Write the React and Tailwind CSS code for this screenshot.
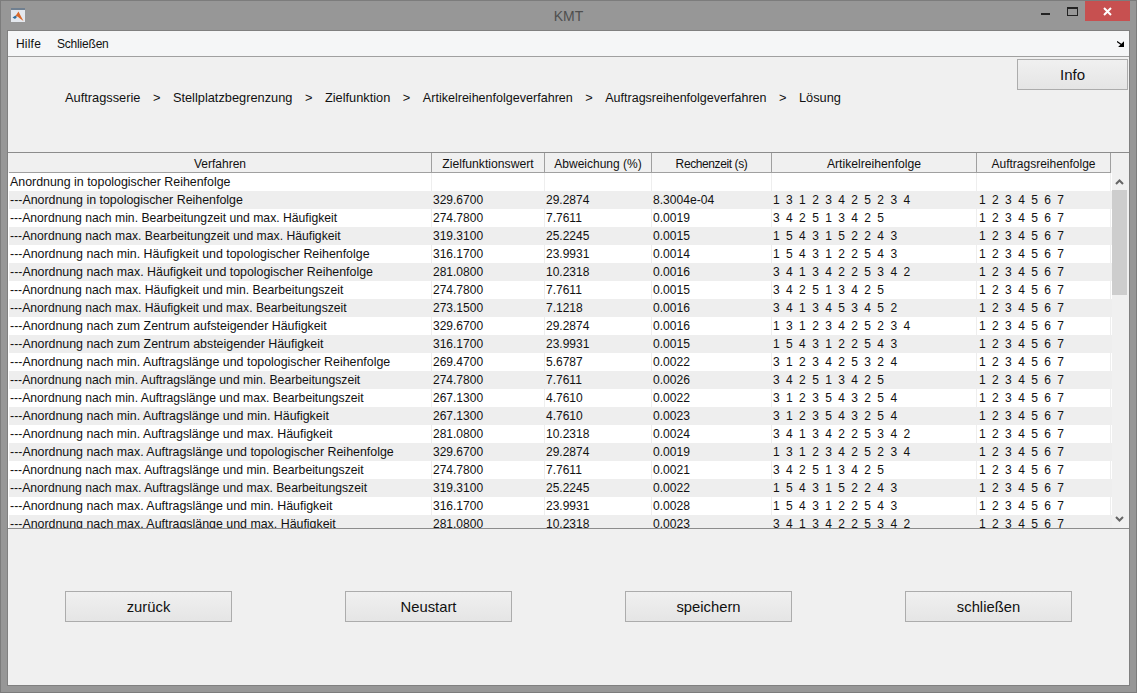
import React from "react";

const COLS = ["w-[423px]", "w-[113px]", "w-[107px]", "w-[120px]", "w-[205px]", "w-[134px]"];
const CELL_TEXT = ["text-[12.4px]", "", "", "text-[12.1px]", "tracking-[-0.1px] pl-[1px]", "tracking-[-0.1px] pl-[2px]"];

const rows = [
  ["---Anordnung in topologischer Reihenfolge", "329.6700", "29.2874", "8.3004e-04", "1 3 1 2 3 4 2 5 2 3 4"],
  ["---Anordnung nach min. Bearbeitungzeit und max. Häufigkeit", "274.7800", "7.7611", "0.0019", "3 4 2 5 1 3 4 2 5"],
  ["---Anordnung nach max. Bearbeitungzeit und max. Häufigkeit", "319.3100", "25.2245", "0.0015", "1 5 4 3 1 5 2 2 4 3"],
  ["---Anordnung nach min. Häufigkeit und topologischer Reihenfolge", "316.1700", "23.9931", "0.0014", "1 5 4 3 1 2 2 5 4 3"],
  ["---Anordnung nach max. Häufigkeit und topologischer Reihenfolge", "281.0800", "10.2318", "0.0016", "3 4 1 3 4 2 2 5 3 4 2"],
  ["---Anordnung nach max. Häufigkeit und min. Bearbeitungszeit", "274.7800", "7.7611", "0.0015", "3 4 2 5 1 3 4 2 5"],
  ["---Anordnung nach max. Häufigkeit und max. Bearbeitungszeit", "273.1500", "7.1218", "0.0016", "3 4 1 3 4 5 3 4 5 2"],
  ["---Anordnung nach zum Zentrum aufsteigender Häufigkeit", "329.6700", "29.2874", "0.0016", "1 3 1 2 3 4 2 5 2 3 4"],
  ["---Anordnung nach zum Zentrum absteigender Häufigkeit", "316.1700", "23.9931", "0.0015", "1 5 4 3 1 2 2 5 4 3"],
  ["---Anordnung nach min. Auftragslänge und topologischer Reihenfolge", "269.4700", "5.6787", "0.0022", "3 1 2 3 4 2 5 3 2 4"],
  ["---Anordnung nach min. Auftragslänge und min. Bearbeitungszeit", "274.7800", "7.7611", "0.0026", "3 4 2 5 1 3 4 2 5"],
  ["---Anordnung nach min. Auftragslänge und max. Bearbeitungszeit", "267.1300", "4.7610", "0.0022", "3 1 2 3 5 4 3 2 5 4"],
  ["---Anordnung nach min. Auftragslänge und min. Häufigkeit", "267.1300", "4.7610", "0.0023", "3 1 2 3 5 4 3 2 5 4"],
  ["---Anordnung nach min. Auftragslänge und max. Häufigkeit", "281.0800", "10.2318", "0.0024", "3 4 1 3 4 2 2 5 3 4 2"],
  ["---Anordnung nach max. Auftragslänge und topologischer Reihenfolge", "329.6700", "29.2874", "0.0019", "1 3 1 2 3 4 2 5 2 3 4"],
  ["---Anordnung nach max. Auftragslänge und min. Bearbeitungszeit", "274.7800", "7.7611", "0.0021", "3 4 2 5 1 3 4 2 5"],
  ["---Anordnung nach max. Auftragslänge und max. Bearbeitungszeit", "319.3100", "25.2245", "0.0022", "1 5 4 3 1 5 2 2 4 3"],
  ["---Anordnung nach max. Auftragslänge und min. Häufigkeit", "316.1700", "23.9931", "0.0028", "1 5 4 3 1 2 2 5 4 3"],
  ["---Anordnung nach max. Auftragslänge und max. Häufigkeit", "281.0800", "10.2318", "0.0023", "3 4 1 3 4 2 2 5 3 4 2"],
];

const headers = ["Verfahren", "Zielfunktionswert", "Abweichung (%)", "Rechenzeit (s)", "Artikelreihenfolge", "Auftragsreihenfolge"];
const HEADER_TEXT = ["", "text-[12.2px]", "", "tracking-[-0.4px]", "text-[12.2px]", ""];
const steps = ["Auftragsserie", "Stellplatzbegrenzung", "Zielfunktion", "Artikelreihenfolgeverfahren", "Auftragsreihenfolgeverfahren", "Lösung"];
const STEP_TEXT = ["", "", "", "text-[12.55px]", "text-[12.5px]", ""];
const buttons = ["zurück", "Neustart", "speichern", "schließen"];

// matlab prints the sequences with two spaces between numbers
const seq = (s) => s.split(" ").join("  ");

const Row = ({ cells, shaded }) => (
  <div className={`flex h-[18px] shrink-0 leading-[18px] ${shaded ? "bg-[#eeeeee]" : "bg-white"}`}>
    {cells.map((c, i) => (
      <div
        key={i}
        className={`${COLS[i]} ${i === 0 && c.includes("Bearbeitung") ? "text-[12.2px]" : CELL_TEXT[i]} shrink-0 whitespace-pre overflow-hidden ${i < 4 ? "pl-[1px]" : ""} ${shaded ? "" : "border-r border-[#eeeeee]"}`}
      >
        {c}
      </div>
    ))}
  </div>
);

const Scrollbar = () => (
  <div className="w-[17px] shrink-0 bg-[#f0f0f0] flex flex-col">
    <div className="h-[17px] w-[15px] flex items-center justify-center shrink-0">
      <svg width="9" height="6" viewBox="0 0 9 6"><path d="M1 5 L4.5 1.5 L8 5" fill="none" stroke="#666" strokeWidth="2" /></svg>
    </div>
    <div className="w-[15px] h-[105px] bg-[#cdcdcd] shrink-0" />
    <div className="flex-1" />
    <div className="h-[18px] w-[15px] flex items-center justify-center shrink-0">
      <svg width="9" height="6" viewBox="0 0 9 6"><path d="M1 1 L4.5 4.5 L8 1" fill="none" stroke="#666" strokeWidth="2" /></svg>
    </div>
  </div>
);

const App = () => {
  return (
    <div className="w-[1137px] h-[693px] flex flex-col overflow-hidden bg-[#979797] border border-[#7c7c7c] text-[12px] text-[#111] font-['Liberation_Sans',Arial,sans-serif]">
      <div className="h-[29px] shrink-0 flex items-start">
        <div className="w-[110px] shrink-0">
          <div className="ml-[10px] mt-[7px] w-[14px] h-[14px] bg-[#e4e8ee] border-t-2 border-[#6f7f90] flex items-center justify-center">
            <svg width="12" height="11" viewBox="0 0 12 11">
              <path d="M0.5 6.5 L3.5 4.5 L5 6 L3 8 Z" fill="#2f6f9f" />
              <path d="M3.5 5 L6.5 0.5 L9 5.5 L11.5 10 L8 7.5 L5.5 5.5 Z" fill="#d9682a" />
            </svg>
          </div>
        </div>
        <div className="flex-1 text-center text-[14px] leading-[31px] text-[#4f4f4f]">KMT</div>
        <div className="w-[104px] shrink-0 flex items-start justify-end mr-[6px]">
          <div className="w-[9px] h-[2px] bg-[#222] mt-[12px] mr-[17px]" />
          <div className="w-[11px] h-[9px] border border-[#222] border-t-2 mt-[6px] mr-[7px]" />
          <div className="w-[45px] h-[20px] shrink-0 bg-[#c75050] flex items-center justify-center">
            <svg width="9" height="9" viewBox="0 0 9 9"><path d="M1 1 L8 8 M8 1 L1 8" stroke="#fff" strokeWidth="2" /></svg>
          </div>
        </div>
      </div>

      <div className="flex-1 mx-[6px] mb-[6px] bg-[#f0f0f0] flex flex-col border border-[#808080] min-h-0">
        <div className="h-[26px] shrink-0 bg-[#f5f6f7] border-b border-[#a0a0a0] flex items-center pl-[8px] gap-[16px] relative">
          <span className="tracking-[0.2px]">Hilfe</span>
          <span className="tracking-[-0.2px]">Schließen</span>
          <svg className="absolute right-[5px] top-[10px]" width="7" height="6" viewBox="0 0 7 6">
            <path d="M0 0.5 L5 4 M6.5 1.5 L6.5 5.5 L2.5 5.5 Z" stroke="#000" strokeWidth="1.2" fill="#000" />
          </svg>
        </div>

        <div className="h-[95px] shrink-0 flex items-start relative pl-[57px] pt-[32px] leading-[18px] text-[12.8px]">
          {steps.map((s, i) => (
            <React.Fragment key={s}>
              {i > 0 && <span className="mx-[12.5px]">&gt;</span>}
              <span className={STEP_TEXT[i]}>{s}</span>
            </React.Fragment>
          ))}
          <button className="absolute right-[1px] top-[2px] w-[111px] h-[31px] border border-[#acacac] bg-gradient-to-b from-[#f0f0f0] to-[#e5e5e5] text-[15px]">
            Info
          </button>
        </div>

        <div className="h-[377px] shrink-0 bg-white border-t border-b border-[#8c8c8c] flex flex-col overflow-hidden">
          <div className="h-[20px] shrink-0 bg-[#f0f0f0] pl-[1px]">
            <div className="flex w-max h-[20px] border-b border-[#a0a0a0] leading-[22px]">
              {headers.map((h, i) => (
                <div key={h} className={`${COLS[i]} ${HEADER_TEXT[i]} shrink-0 text-center border-r border-[#a0a0a0]`}>{h}</div>
              ))}
            </div>
          </div>
          <div className="flex-1 flex min-h-0">
            <div className="flex-1 flex flex-col min-w-0 pl-[1px] overflow-hidden">
              <Row cells={["Anordnung in topologischer Reihenfolge", "", "", "", "", ""]} />
              {rows.map((r, i) => (
                <Row key={i} shaded={i % 2 === 0} cells={[r[0], r[1], r[2], r[3], seq(r[4]), seq("1 2 3 4 5 6 7")]} />
              ))}
            </div>
            <Scrollbar />
          </div>
        </div>

        <div className="flex-1 flex items-start pl-[57px] pt-[62px] gap-[113px]">
          {buttons.map((b) => (
            <button key={b} className="w-[167px] h-[31px] pt-[1px] border border-[#acacac] bg-gradient-to-b from-[#f0f0f0] to-[#e5e5e5] text-[14.8px]">
              {b}
            </button>
          ))}
        </div>
      </div>
    </div>
  );
};

export default App;
